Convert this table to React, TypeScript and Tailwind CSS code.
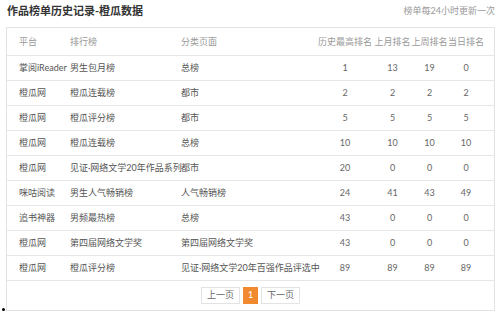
import React from "react";

type Row = {
  platform: string;
  board: string;
  category: string;
  best: number;
  month: number;
  week: number;
  day: number;
};

const rows: Row[] = [
  { platform: "掌阅iReader", board: "男生包月榜", category: "总榜", best: 1, month: 13, week: 19, day: 0 },
  { platform: "橙瓜网", board: "橙瓜连载榜", category: "都市", best: 2, month: 2, week: 2, day: 2 },
  { platform: "橙瓜网", board: "橙瓜评分榜", category: "都市", best: 5, month: 5, week: 5, day: 5 },
  { platform: "橙瓜网", board: "橙瓜连载榜", category: "总榜", best: 10, month: 10, week: 10, day: 10 },
  { platform: "橙瓜网", board: "见证·网络文学20年作品系列", category: "都市", best: 20, month: 0, week: 0, day: 0 },
  { platform: "咪咕阅读", board: "男生人气畅销榜", category: "人气畅销榜", best: 24, month: 41, week: 43, day: 49 },
  { platform: "追书神器", board: "男频最热榜", category: "总榜", best: 43, month: 0, week: 0, day: 0 },
  { platform: "橙瓜网", board: "第四届网络文学奖", category: "第四届网络文学奖", best: 43, month: 0, week: 0, day: 0 },
  { platform: "橙瓜网", board: "橙瓜评分榜", category: "见证·网络文学20年百强作品评选中", best: 89, month: 89, week: 89, day: 89 },
];

export default function App() {
  return (
    <div className="w-[499px] h-[315px] bg-white relative font-['Lato','Noto_Sans_CJK_SC',sans-serif] text-[#555]">
      {/* title bar */}
      <div className="flex items-center justify-between h-[21px] pl-[7px] pr-[4px]">
        <div className="text-[11px] font-bold text-[#333] leading-none">作品榜单历史记录-橙瓜数据</div>
        <span className="text-[9px] text-[#999] leading-none">榜单每24小时更新一次</span>
      </div>

      {/* table box */}
      <div className="ml-[6px] mt-[6px] w-[489px] border border-[#e3e3e3]">
        <table className="w-full table-fixed border-collapse text-[9px] leading-none">
          <colgroup>
            <col className="w-[60px]" />
            <col className="w-[110px]" />
            <col className="w-[139px]" />
            <col className="w-[58px]" />
            <col className="w-[37px]" />
            <col className="w-[37px]" />
            <col className="w-[46px]" />
          </colgroup>
          <thead>
            <tr className="h-[27px] border-b border-[#e6e6e6] text-[#999] whitespace-nowrap">
              <th className="pl-[12px] text-left font-normal">平台</th>
              <th className="pl-[3px] text-left font-normal">排行榜</th>
              <th className="pl-[4px] text-left font-normal">分类页面</th>
              <th className="font-normal text-center">历史最高排名</th>
              <th className="font-normal text-center">上月排名</th>
              <th className="font-normal text-center">上周排名</th>
              <th className="pr-[10px] font-normal text-center">当日排名</th>
            </tr>
          </thead>
          <tbody>
            {rows.map((r, i) => (
              <tr key={i} className="h-[25px] border-b border-[#e6e6e6] whitespace-nowrap">
                <td className="pl-[12px]">{r.platform}</td>
                <td className="pl-[3px]">{r.board}</td>
                <td className="pl-[4px]">{r.category}</td>
                <td className="text-center text-[#666]">{r.best}</td>
                <td className="text-center text-[#666]">{r.month}</td>
                <td className="text-center text-[#666]">{r.week}</td>
                <td className="pr-[10px] text-center text-[#666]">{r.day}</td>
              </tr>
            ))}
          </tbody>
        </table>

        {/* pagination */}
        <div className="h-[29px] flex items-center justify-center gap-[3px] text-[9px]">
          <span className="h-[17px] px-[5px] flex items-center border border-[#e3e3e3] text-[#666]">上一页</span>
          <span className="h-[17px] w-[15px] flex items-center justify-center bg-[#f18a2e] text-white">1</span>
          <span className="h-[17px] px-[5px] flex items-center border border-[#e3e3e3] text-[#666]">下一页</span>
        </div>
      </div>

      {/* list marker */}
      <span className="absolute left-[2px] top-[308px] w-[3px] h-[3px] rounded-full bg-black" />
    </div>
  );
}
